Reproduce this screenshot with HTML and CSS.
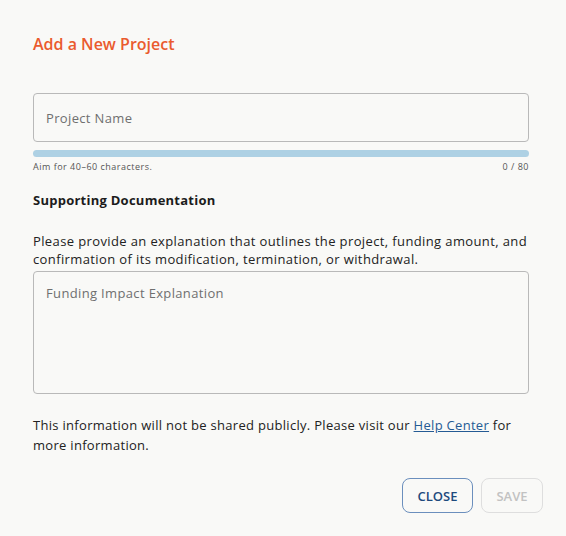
FILE: index.html
```html
<!DOCTYPE html>
<html lang="en">
<head>
<meta charset="utf-8">
<title>Add a New Project</title>
<link rel="stylesheet" href="styles.css">
</head>
<body>
<div class="dialog">
  <div class="content">
    <h2 class="title">Add a New Project</h2>
    <div class="field">
      <div class="input">Project Name</div>
      <div class="bar"></div>
      <div class="helper"><span>Aim for 40–60 characters.</span><span>0 / 80</span></div>
    </div>
    <h3 class="section">Supporting Documentation</h3>
    <p class="desc">Please provide an explanation that outlines the project, funding amount, and confirmation of its modification, termination, or withdrawal.</p>
    <div class="textarea">Funding Impact Explanation</div>
    <p class="info">This information will not be shared publicly. Please visit our <a href="#">Help Center</a> for more information.</p>
  </div>
  <div class="actions">
    <button class="btn btn-close">CLOSE</button>
    <button class="btn btn-save" disabled>SAVE</button>
  </div>
</div>
</body>
</html>
```
FILE: styles.css
```css
html, body {
  margin: 0;
  padding: 0;
  background: #f9f9f7;
}
body {
  font-family: "Open Sans", "Noto Sans", sans-serif;
  color: #222;
}
.dialog {
  width: 566px;
  height: 536px;
  display: flex;
  flex-direction: column;
}
.content {
  padding: 32px 37px 0 33px;
}
.title {
  margin: 0;
  font-size: 16px;
  line-height: 24px;
  font-weight: 600;
  color: #ea5b2e;
}
.field {
  margin-top: 37px;
}
.input {
  box-sizing: border-box;
  height: 49px;
  border: 1px solid #b9b9b9;
  border-radius: 4px;
  padding: 0 12px;
  display: flex;
  align-items: center;
  font-size: 13px;
  letter-spacing: 0.35px;
  color: #6f6f6f;
}
.bar {
  margin-top: 8px;
  height: 7px;
  border-radius: 4px;
  background: #aed1e4;
}
.helper {
  display: flex;
  justify-content: space-between;
  margin-top: 4px;
  font-size: 9px;
  line-height: 12px;
  letter-spacing: 0.5px;
  color: #555;
}
.section {
  margin: 17px 0 0;
  font-size: 13px;
  line-height: 20px;
  font-weight: 700;
  letter-spacing: 0.25px;
  color: #1c1c1c;
}
.desc {
  margin: 22px -2px 0 0;
  font-size: 13px;
  line-height: 18px;
  letter-spacing: 0.38px;
  color: #222;
}
.textarea {
  box-sizing: border-box;
  margin-top: 3px;
  height: 123px;
  border: 1px solid #b9b9b9;
  border-radius: 4px;
  padding: 12px 12px;
  font-size: 13px;
  line-height: 18px;
  letter-spacing: 0.35px;
  color: #6f6f6f;
}
.info {
  margin: 21px 0 0;
  font-size: 13px;
  line-height: 20px;
  letter-spacing: 0.3px;
  color: #222;
}
.info a {
  color: #255b94;
}
.actions {
  display: flex;
  justify-content: flex-end;
  gap: 8px;
  padding: 23px 23px 0 0;
}
.btn {
  box-sizing: border-box;
  height: 35px;
  border-radius: 8px;
  background: transparent;
  font-family: inherit;
  font-size: 13px;
  font-weight: 600;
  padding: 0;
}
.btn-close {
  width: 71px;
  border: 1px solid #6b8fbd;
  color: #1e4a7d;
}
.btn-save {
  width: 62px;
  border: 1px solid #dedede;
  color: #c2c2c2;
}
```
